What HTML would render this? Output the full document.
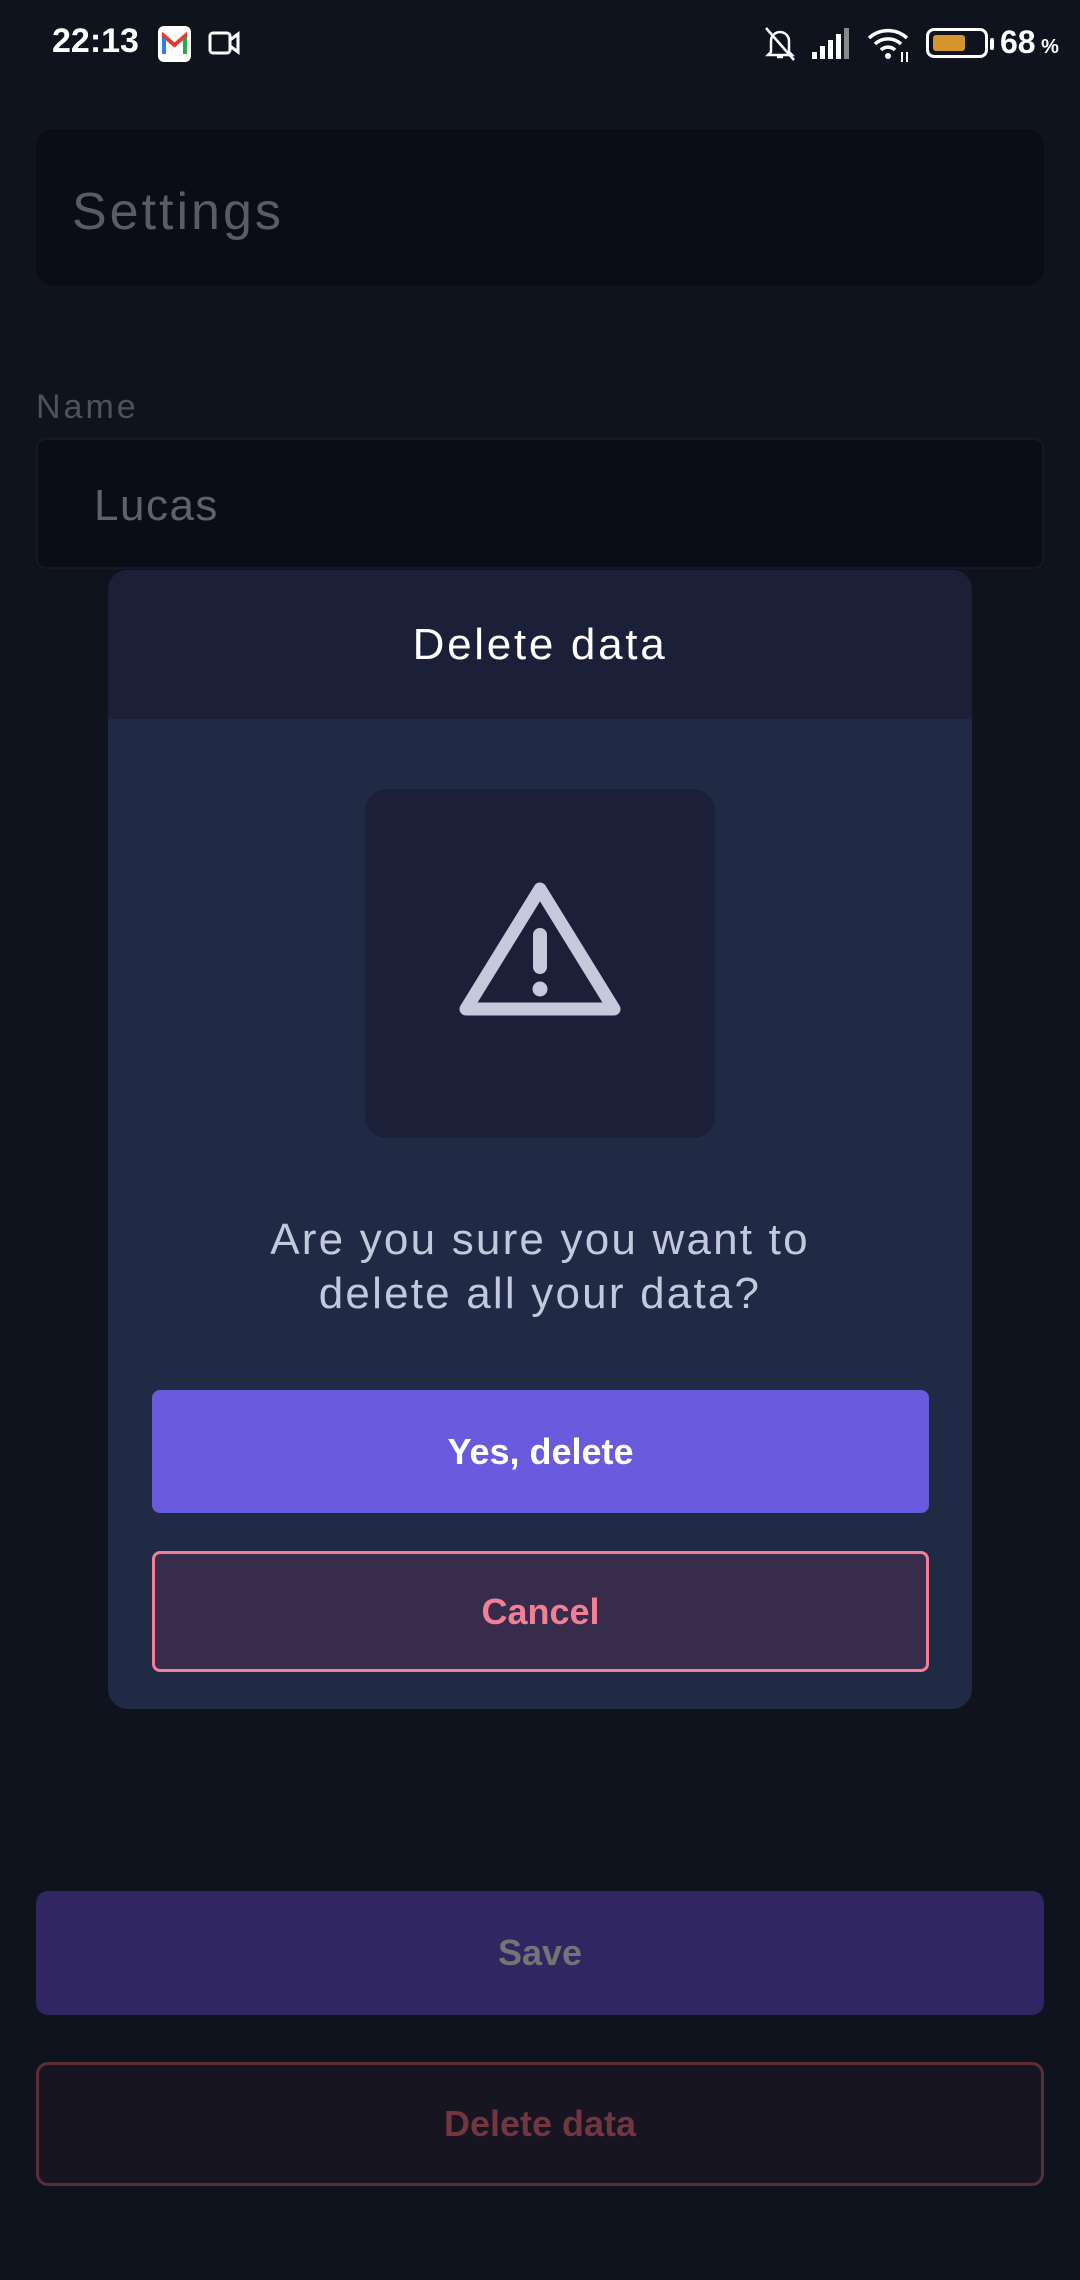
<!DOCTYPE html>
<html><head><meta charset="utf-8"><style>
*{margin:0;padding:0;box-sizing:border-box}
body{width:1080px;height:2280px;background:#0f131e;font-family:"Liberation Sans",sans-serif;position:relative;overflow:hidden}
.abs{position:absolute}
.c{display:flex;align-items:center;justify-content:center}
</style></head><body>
<!-- status bar -->
<div class="abs" style="left:52px;top:22px;font-size:34px;font-weight:bold;color:#fff">22:13</div>
<div class="abs" style="left:158px;top:26px;width:33px;height:36px;background:#fff;border-radius:6px">
<svg width="33" height="36" viewBox="0 0 33 36"><path d="M6 28V10l10.5 9L27 10v18" fill="none" stroke="#e8392d" stroke-width="4"/><path d="M6 28V12" stroke="#2f7ff0" stroke-width="4"/><path d="M27 28V12" stroke="#2aa84c" stroke-width="4"/></svg></div>
<svg class="abs" style="left:208px;top:30px" width="34" height="26" viewBox="0 0 34 26"><rect x="2" y="3" width="20" height="20" rx="3" fill="none" stroke="#fff" stroke-width="3"/><path d="M22 10l8-6v18l-8-6" fill="none" stroke="#fff" stroke-width="3"/></svg>
<svg class="abs" style="left:762px;top:24px" width="36" height="40" viewBox="0 0 36 40"><path d="M9 28V17a9 9 0 0 1 18 0v11l3 3H6z M15 33h6" fill="none" stroke="#fff" stroke-width="2.5"/><path d="M4 4l28 32" stroke="#fff" stroke-width="2.5"/></svg>
<svg class="abs" style="left:810px;top:26px" width="42" height="34" viewBox="0 0 42 34"><rect x="2" y="26" width="5" height="7" fill="#fff"/><rect x="10" y="20" width="5" height="13" fill="#fff"/><rect x="18" y="14" width="5" height="19" fill="#fff"/><rect x="26" y="8" width="5" height="25" fill="#fff"/><rect x="34" y="2" width="5" height="31" fill="#888"/></svg>
<svg class="abs" style="left:866px;top:24px" width="46" height="40" viewBox="0 0 46 40"><path d="M3 14a28 28 0 0 1 38 0M9 20a19 19 0 0 1 26 0M15 26a10 10 0 0 1 14 0" fill="none" stroke="#fff" stroke-width="3.5"/><circle cx="22" cy="32" r="3" fill="#fff"/><path d="M36 28v10M41 28v10" stroke="#fff" stroke-width="2"/></svg>
<div class="abs" style="left:926px;top:28px;width:62px;height:30px;border:3px solid #fff;border-radius:8px"><div style="margin:4px;width:32px;height:16px;background:#d4962c;border-radius:3px"></div></div>
<div class="abs" style="left:990px;top:38px;width:4px;height:12px;background:#fff;border-radius:2px"></div>
<div class="abs" style="left:1000px;top:24px;font-size:32px;font-weight:bold;color:#fff">68<span style="font-size:20px"> %</span></div>

<!-- background content -->
<div class="abs" style="left:36px;top:129px;width:1008px;height:157px;background:#0a0d17;border-radius:18px"></div>
<div class="abs" style="left:72px;top:182px;font-size:52px;color:#595c67;letter-spacing:3px">Settings</div>
<div class="abs" style="left:36px;top:388px;font-size:34px;color:#4e525c;letter-spacing:3px">Name</div>
<div class="abs" style="left:36px;top:438px;width:1008px;height:131px;background:#0a0d17;border:2px solid #151924;border-radius:10px"></div>
<div class="abs" style="left:94px;top:481px;font-size:44px;color:#606269;letter-spacing:1.5px">Lucas</div>

<div class="abs c" style="left:36px;top:1891px;width:1008px;height:124px;background:#2f2662;border-radius:12px;font-size:36px;font-weight:bold;color:#747474">Save</div>
<div class="abs c" style="left:36px;top:2062px;width:1008px;height:124px;background:#161521;border:3px solid #5c2c39;border-radius:12px;font-size:36px;font-weight:bold;color:#713640">Delete data</div>

<!-- dialog -->
<div class="abs" style="left:108px;top:570px;width:864px;height:1139px;background:#212a45;border-radius:20px;overflow:hidden">
<div class="c" style="height:149px;background:#1b1f38;font-size:44px;color:#fff;letter-spacing:2.7px">Delete data</div>
</div>
<div class="abs c" style="left:365px;top:789px;width:350px;height:349px;background:#1b1f38;border-radius:22px">
<svg width="170" height="170" viewBox="0 0 170 170"><polygon points="85,10 159,130 11,130" fill="none" stroke="#c4cadc" stroke-width="13" stroke-linejoin="round"/><path d="M85 56v32" stroke="#c4cadc" stroke-width="14" stroke-linecap="round"/><circle cx="85" cy="110" r="7.5" fill="#c4cadc"/></svg>
</div>
<div class="abs" style="left:108px;top:1213px;width:864px;text-align:center;font-size:44px;line-height:54px;color:#c2c9dc;letter-spacing:2.2px">Are you sure you want to<br>delete all your data?</div>
<div class="abs c" style="left:152px;top:1390px;width:777px;height:123px;background:#6a5ade;border-radius:8px;font-size:36px;font-weight:bold;color:#fff">Yes, delete</div>
<div class="abs c" style="left:152px;top:1551px;width:777px;height:121px;background:#372c4b;border:3px solid #f08095;border-radius:8px;font-size:36px;font-weight:bold;color:#f08095">Cancel</div>
</body></html>
